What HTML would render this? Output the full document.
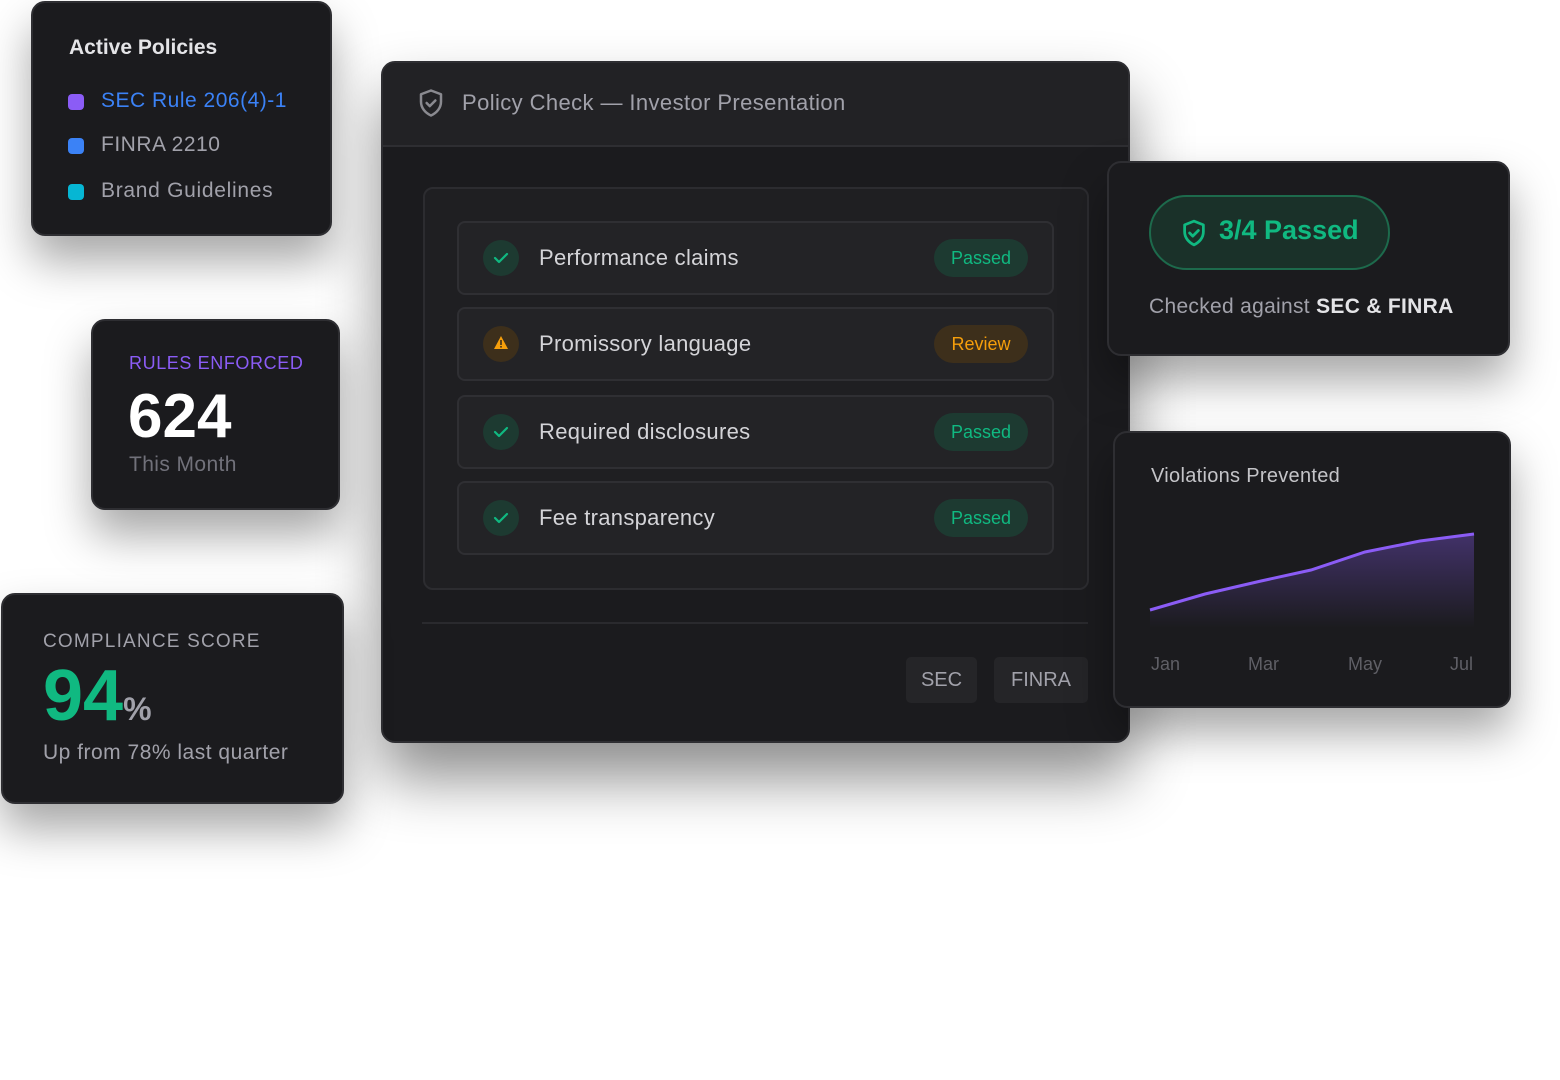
<!DOCTYPE html>
<html><head><style>
*{box-sizing:border-box;margin:0;padding:0}
body{width:1560px;height:1080px;background:#fff;position:relative;overflow:hidden;font-family:"Liberation Sans",sans-serif}
.card{position:absolute;background:#1b1b1e;border:2px solid #2e2e32;border-radius:14px;box-shadow:0 25px 45px rgba(0,0,0,.35)}
.abs{position:absolute}
.row{position:absolute;left:32px;width:597px;height:74px;background:#232326;border:2px solid #2f2f33;border-radius:8px}
.row .ic{position:absolute;left:24px;top:17px;width:36px;height:36px;border-radius:50%;background:#1d3a31}
.row .t{position:absolute;left:80px;top:22px;font-size:22px;color:#d4d4d8;letter-spacing:.3px}
.pill{position:absolute;right:24px;top:16px;width:94px;height:38px;border-radius:19px;background:#1d3a31;color:#10b981;font-size:18px;text-align:center;line-height:38px}
.btn{position:absolute;top:594px;height:46px;background:#252528;border-radius:5px;color:#a1a1aa;font-size:20px;line-height:46px;text-align:center}
</style></head><body>

<div class="card" style="left:381px;top:61px;width:749px;height:682px;background:#1b1b1e;box-shadow:0 35px 60px rgba(0,0,0,.45);overflow:hidden">
  <div class="abs" style="left:0;top:0;width:100%;height:84px;background:#222225;border-bottom:2px solid #2e2e32"></div>
  <svg class="abs" style="left:33px;top:25px" width="30" height="30" viewBox="0 0 24 24" fill="none" stroke="#8a8a90" stroke-width="2" stroke-linecap="round" stroke-linejoin="round"><path d="M12 2l8 3v6c0 5-3.5 9-8 11-4.5-2-8-6-8-11V5z"/><path d="M8.5 12l2.5 2.5 4.5-4.5"/></svg>
  <div class="abs" style="left:79px;top:27px;font-size:22px;color:#a1a1aa;letter-spacing:.4px">Policy Check — Investor Presentation</div>
  <div class="abs" style="left:40px;top:124px;width:666px;height:403px;background:#1f1f22;border:2px solid #2c2c30;border-radius:10px">
    <div class="row" style="top:32px"><div class="ic"><svg width="36" height="36" viewBox="0 0 36 36"><path d="M12 18l4 4 8-8" stroke="#10b981" stroke-width="2.2" fill="none" stroke-linecap="round" stroke-linejoin="round"/></svg></div><div class="t">Performance claims</div><div class="pill">Passed</div></div>
    <div class="row" style="top:118px"><div class="ic" style="background:#3d2f1b"><svg width="36" height="36" viewBox="0 0 36 36"><path d="M18 10l7 13H11z" fill="#f59e0b"/><rect x="17.2" y="14" width="1.6" height="5" fill="#3d2f1b"/><rect x="17.2" y="20" width="1.6" height="1.6" fill="#3d2f1b"/></svg></div><div class="t">Promissory language</div><div class="pill" style="background:#3d2f1b;color:#f59e0b">Review</div></div>
    <div class="row" style="top:206px"><div class="ic"><svg width="36" height="36" viewBox="0 0 36 36"><path d="M12 18l4 4 8-8" stroke="#10b981" stroke-width="2.2" fill="none" stroke-linecap="round" stroke-linejoin="round"/></svg></div><div class="t">Required disclosures</div><div class="pill">Passed</div></div>
    <div class="row" style="top:292px"><div class="ic"><svg width="36" height="36" viewBox="0 0 36 36"><path d="M12 18l4 4 8-8" stroke="#10b981" stroke-width="2.2" fill="none" stroke-linecap="round" stroke-linejoin="round"/></svg></div><div class="t">Fee transparency</div><div class="pill">Passed</div></div>
  </div>
  <div class="abs" style="left:39px;top:559px;width:666px;height:2px;background:#2a2a2e"></div>
  <div class="btn" style="left:523px;width:71px">SEC</div>
  <div class="btn" style="left:611px;width:94px">FINRA</div>
</div>

<div class="card" style="left:31px;top:1px;width:301px;height:235px">
  <div class="abs" style="left:36px;top:33px;font-size:21px;font-weight:bold;color:#e4e4e7">Active Policies</div>
  <div class="abs" style="left:35px;top:91px;width:16px;height:16px;border-radius:4px;background:#8b5cf6"></div>
  <div class="abs" style="left:68px;top:86px;font-size:21px;color:#3b82f6;letter-spacing:.5px">SEC Rule 206(4)-1</div>
  <div class="abs" style="left:35px;top:135px;width:16px;height:16px;border-radius:4px;background:#3b82f6"></div>
  <div class="abs" style="left:68px;top:130px;font-size:21px;color:#a1a1aa;letter-spacing:.5px">FINRA 2210</div>
  <div class="abs" style="left:35px;top:181px;width:16px;height:16px;border-radius:4px;background:#06b6d4"></div>
  <div class="abs" style="left:68px;top:176px;font-size:21px;color:#a1a1aa;letter-spacing:.7px">Brand Guidelines</div>
</div>

<div class="card" style="left:91px;top:319px;width:249px;height:191px">
  <div class="abs" style="left:36px;top:32px;font-size:18px;color:#8b5cf6;letter-spacing:.6px">RULES ENFORCED</div>
  <div class="abs" style="left:35px;top:60px;font-size:62px;font-weight:bold;color:#fff">624</div>
  <div class="abs" style="left:36px;top:132px;font-size:21px;color:#71717a;letter-spacing:.4px">This Month</div>
</div>

<div class="card" style="left:1px;top:593px;width:343px;height:211px">
  <div class="abs" style="left:40px;top:36px;font-size:19px;color:#a1a1aa;letter-spacing:1.2px">COMPLIANCE SCORE</div>
  <div class="abs" style="left:40px;top:60px;font-size:72px;font-weight:bold;color:#10b981">94<span style="font-size:32px;color:#a1a1aa">%</span></div>
  <div class="abs" style="left:40px;top:146px;font-size:21px;color:#a1a1aa;letter-spacing:.5px">Up from 78% last quarter</div>
</div>

<div class="card" style="left:1107px;top:161px;width:403px;height:195px">
  <div class="abs" style="left:40px;top:32px;width:241px;height:75px;border-radius:38px;background:#1a3129;border:2px solid #1d6a4c"></div>
  <svg class="abs" style="left:70px;top:55px" width="30" height="30" viewBox="0 0 24 24" fill="none" stroke="#10b981" stroke-width="2.2" stroke-linecap="round" stroke-linejoin="round"><path d="M12 2.5l7.5 3v5.5c0 4.8-3.3 8.5-7.5 10.5-4.2-2-7.5-5.7-7.5-10.5V5.5z"/><path d="M8.5 12l2.5 2.5 4.5-4.5"/></svg>
  <div class="abs" style="left:110px;top:52px;font-size:27px;font-weight:bold;color:#10b981">3/4 Passed</div>
  <div class="abs" style="left:40px;top:132px;font-size:21px;color:#a1a1aa;letter-spacing:.3px">Checked against <b style="color:#e4e4e7">SEC &amp; FINRA</b></div>
</div>

<div class="card" style="left:1113px;top:431px;width:398px;height:277px">
  <div class="abs" style="left:36px;top:32px;font-size:20px;color:#c4c4c8;letter-spacing:.3px">Violations Prevented</div>
  <svg class="abs" style="left:0;top:0" width="398" height="277">
    <defs><linearGradient id="g" x1="0" y1="0" x2="0" y2="1"><stop offset="0" stop-color="#8b5cf6" stop-opacity=".35"/><stop offset="1" stop-color="#8b5cf6" stop-opacity="0"/></linearGradient></defs>
    <path d="M35 177 L90 161 L146 148 L196 137 L250 119 L305 108 L359 101 L359 195 L35 195Z" fill="url(#g)"/>
    <path d="M35 177 L90 161 L146 148 L196 137 L250 119 L305 108 L359 101" stroke="#8b5cf6" stroke-width="3" fill="none"/>
  </svg>
  <div class="abs" style="left:36px;top:221px;font-size:18px;color:#5f5f66">Jan</div>
  <div class="abs" style="left:133px;top:221px;font-size:18px;color:#5f5f66">Mar</div>
  <div class="abs" style="left:233px;top:221px;font-size:18px;color:#5f5f66">May</div>
  <div class="abs" style="left:335px;top:221px;font-size:18px;color:#5f5f66">Jul</div>
</div>
</body></html>
